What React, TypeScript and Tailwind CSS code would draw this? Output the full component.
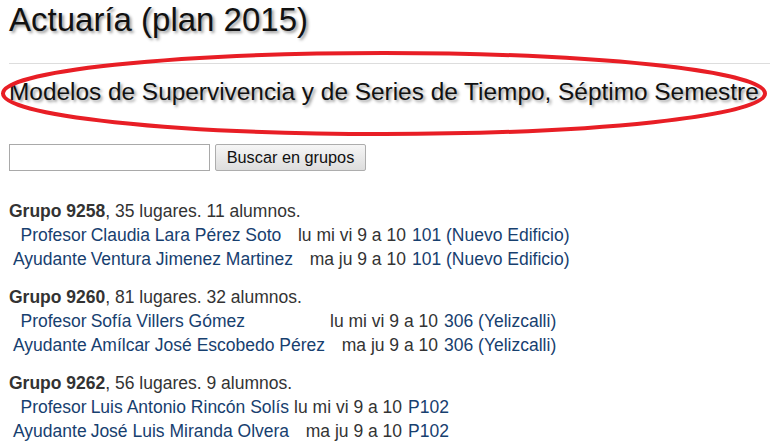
const grupos = [
  {
    num: "9258",
    info: ", 35 lugares. 11 alumnos.",
    rows: [
      { rol: "Profesor", nombre: "Claudia Lara Pérez Soto", horario: "lu mi vi 9 a 10", salon: "101 (Nuevo Edificio)" },
      { rol: "Ayudante", nombre: "Ventura Jimenez Martinez", horario: "ma ju 9 a 10", salon: "101 (Nuevo Edificio)" },
    ],
  },
  {
    num: "9260",
    info: ", 81 lugares. 32 alumnos.",
    rows: [
      { rol: "Profesor", nombre: "Sofía Villers Gómez", horario: "lu mi vi 9 a 10", salon: "306 (Yelizcalli)" },
      { rol: "Ayudante", nombre: "Amílcar José Escobedo Pérez", horario: "ma ju 9 a 10", salon: "306 (Yelizcalli)" },
    ],
  },
  {
    num: "9262",
    info: ", 56 lugares. 9 alumnos.",
    rows: [
      { rol: "Profesor", nombre: "Luis Antonio Rincón Solís", horario: "lu mi vi 9 a 10", salon: "P102" },
      { rol: "Ayudante", nombre: "José Luis Miranda Olvera", horario: "ma ju 9 a 10", salon: "P102" },
    ],
  },
];

const App = () => {
  return (
    <div className="relative min-h-[445px] w-[770px] overflow-hidden bg-white pl-[9px] font-['Liberation_Sans',Arial,sans-serif] text-[#333]">
      {/* Titulo */}
      <h1 className="pt-[1px] text-[33px] leading-[38px] text-[#111] [text-shadow:2px_2px_3px_#999]">
        Actuaría (plan 2015)
      </h1>
      <hr className="mt-[24px] border-t border-[#dddddd]" />
      <h2 className="mt-[15px] whitespace-nowrap text-[24.4px] leading-[26px] text-[#111] [text-shadow:2px_2px_3px_#999]">
        Modelos de Supervivencia y de Series de Tiempo, Séptimo Semestre
      </h2>

      {/* Buscador */}
      <div className="mt-[39px] flex items-center gap-[5px]">
        <input className="h-[27px] w-[201px] border border-[#a9a9a9] bg-white px-1 outline-none" />
        <button className="h-[27px] w-[151px] rounded-[2px] border border-[#adadad] bg-gradient-to-b from-[#f6f6f6] to-[#dddddd] text-[16.3px] text-[#111]">
          Buscar en grupos
        </button>
      </div>

      {/* Grupos */}
      <div className="mt-[28px] flex flex-col gap-[14px] text-[17.5px] leading-[24px]">
        {grupos.map(g => (
          <div key={g.num}>
            <p>
              <b>Grupo {g.num}</b>
              {g.info}
            </p>
            <table className="ml-[4px] border-collapse">
              <tbody>
                {g.rows.map(r => (
                  <tr key={r.rol}>
                    <td className="p-0 pr-[4px] text-right text-[#17406f]">{r.rol}</td>
                    <td className="p-0 pr-[5px] text-[#17406f]">{r.nombre}</td>
                    <td className="p-0 pr-[6px] text-right">{r.horario}</td>
                    <td className="p-0 text-[#17406f]">{r.salon}</td>
                  </tr>
                ))}
              </tbody>
            </table>
          </div>
        ))}
      </div>

      {/* Marca roja */}
      <svg className="pointer-events-none absolute left-0 top-0" width="770" height="445" viewBox="0 0 770 445">
        <ellipse cx="384" cy="93.5" rx="381" ry="40.5" fill="none" stroke="#e81e25" strokeWidth="4" />
      </svg>
    </div>
  );
};

export default App;
